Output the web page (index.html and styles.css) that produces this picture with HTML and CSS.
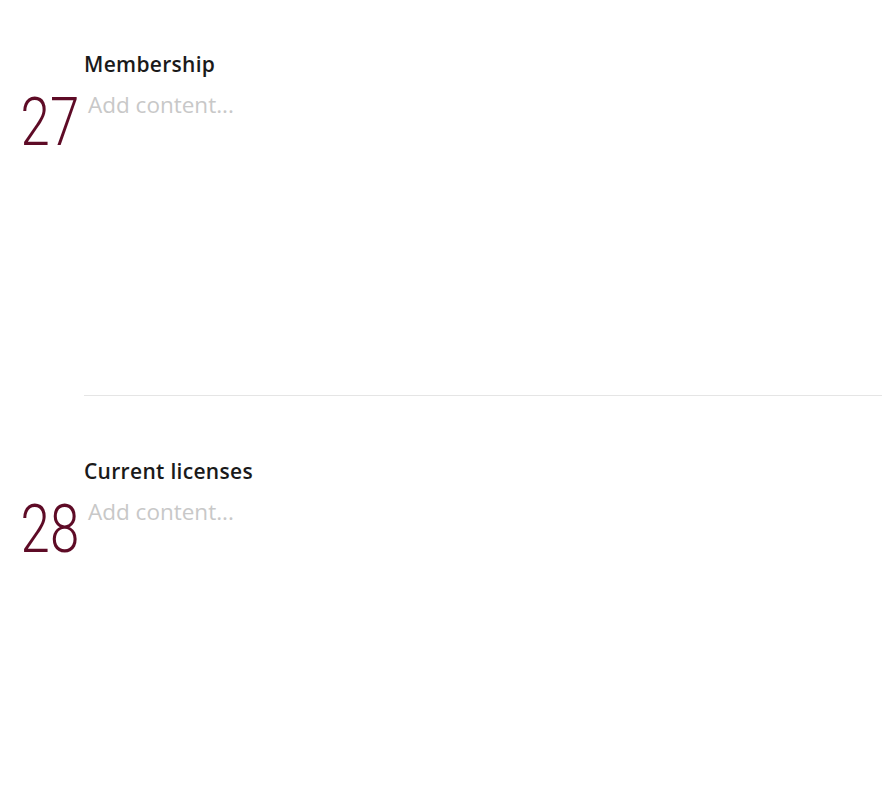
FILE: index.html
```html
<!DOCTYPE html>
<html lang="en">
<head>
  <meta charset="UTF-8">
  <title>Sections</title>
  <link rel="stylesheet" href="styles.css">
</head>
<body class="sheet">

  <section class="entry">
    <h2 class="entry-title">Membership</h2>
    <span class="entry-num">27</span>
    <p class="entry-body">Add content...</p>
  </section>

  <hr class="divider">

  <section class="entry">
    <h2 class="entry-title">Current licenses</h2>
    <span class="entry-num">28</span>
    <p class="entry-body">Add content...</p>
  </section>

</body>
</html>
```

FILE: styles.css
```css
html, body {
  height: 100%;
}
body {
  margin: 0;
  box-sizing: border-box;
}
.sheet {
  font-family: "Open Sans", sans-serif;
  background: #fff;
  padding-top: 50px;
  overflow: hidden;
}
.entry {
  display: grid;
  grid-template-columns: 84px 1fr;
  grid-template-rows: auto 1fr;
  row-gap: 12px;
  height: 345px;
}
.entry-title {
  grid-column: 2;
  grid-row: 1;
  margin: 0;
  font-size: 21px;
  line-height: 28px;
  font-weight: 600;
  letter-spacing: 0.3px;
  color: #1a1a1a;
}
.entry-num {
  grid-column: 1;
  grid-row: 2;
  align-self: start;
  padding-right: 6px;
  text-align: right;
  font-family: "Roboto", sans-serif;
  font-weight: 300;
  font-size: 66px;
  line-height: 1;
  color: #5e0b26;
  transform: scaleX(0.8);
  transform-origin: right center;
}
.entry-body {
  grid-column: 2;
  grid-row: 2;
  margin: 0;
  padding-left: 4px;
  font-size: 22.5px;
  line-height: 30px;
  color: #c8c8c8;
}
.divider {
  margin: 0 0 61px 84px;
  border: 0;
  border-top: 1px solid #e5e5e5;
}
```
